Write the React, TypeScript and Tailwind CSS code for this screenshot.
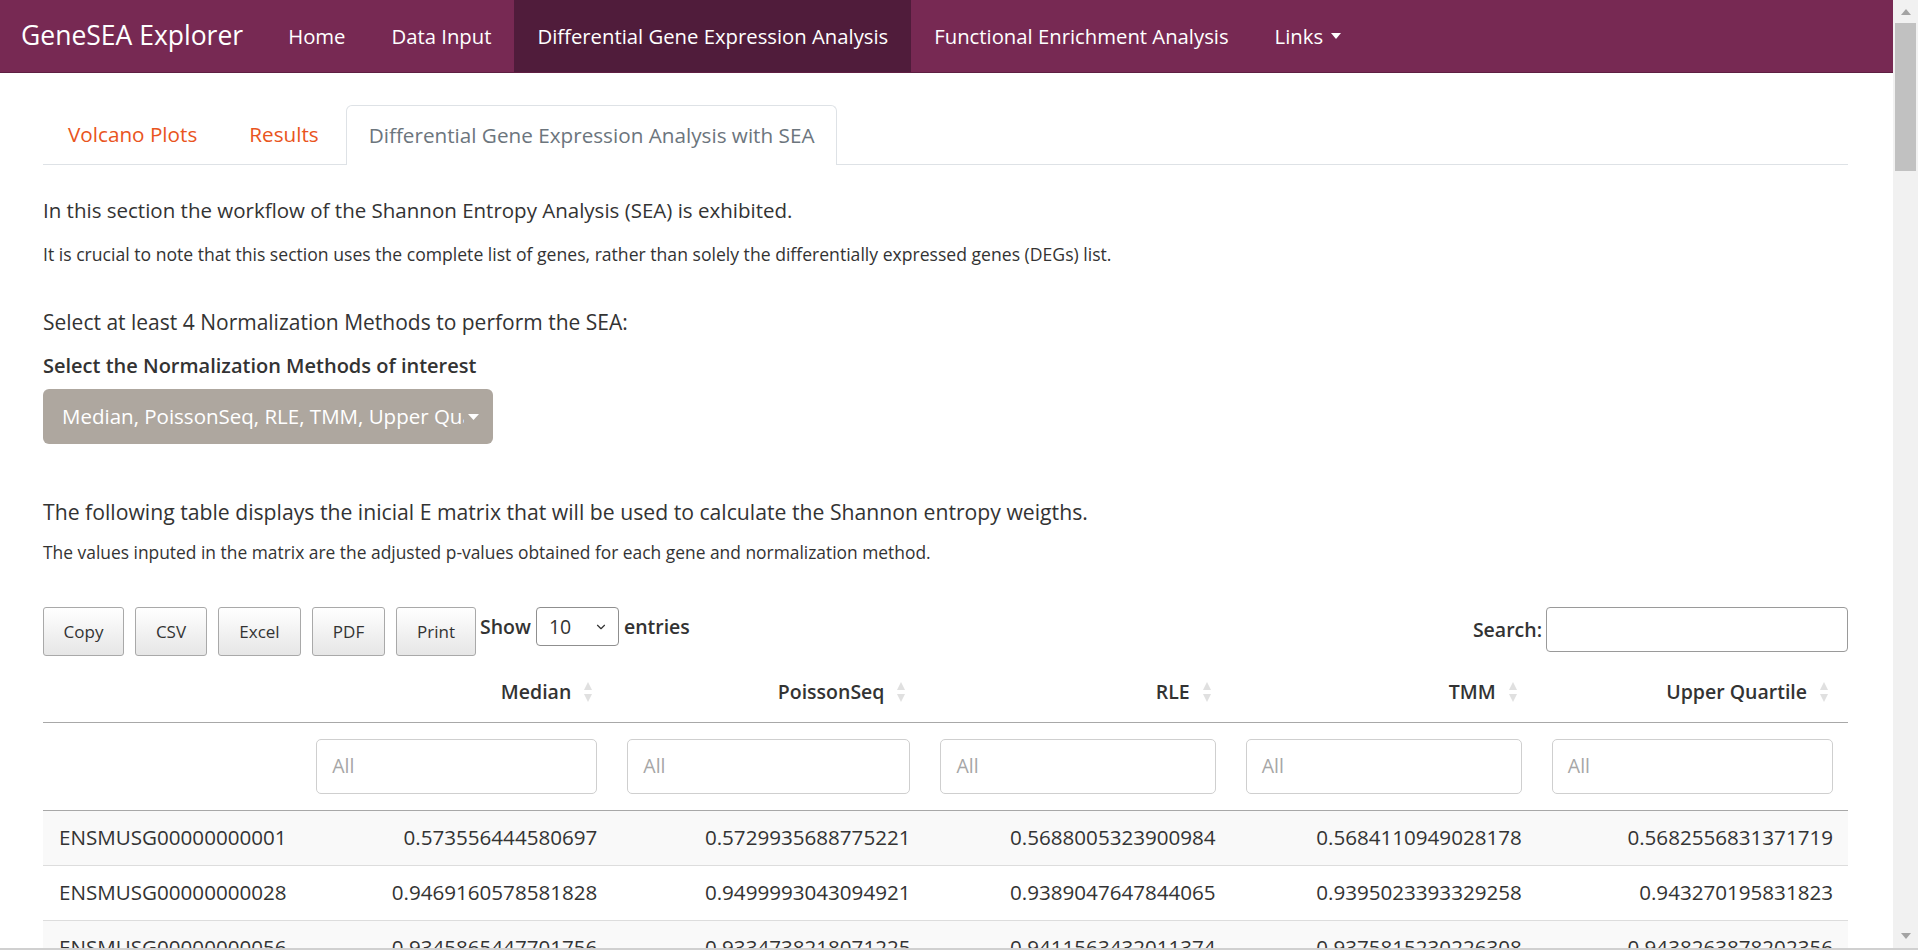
import { ChevronDown } from "lucide-react"

const navItems = [
  { label: "Home", active: false },
  { label: "Data Input", active: false },
  { label: "Differential Gene Expression Analysis", active: true },
  { label: "Functional Enrichment Analysis", active: false },
]

const exportButtons = [
  { label: "Copy", w: "w-[81px]" },
  { label: "CSV", w: "w-[72px]" },
  { label: "Excel", w: "w-[83px]" },
  { label: "PDF", w: "w-[73px]" },
  { label: "Print", w: "w-[80px]" },
]

const columns = ["Median", "PoissonSeq", "RLE", "TMM", "Upper Quartile"]

const rows = [
  ["ENSMUSG00000000001", "0.573556444580697", "0.5729935688775221", "0.5688005323900984", "0.5684110949028178", "0.5682556831371719"],
  ["ENSMUSG00000000028", "0.9469160578581828", "0.9499993043094921", "0.9389047647844065", "0.9395023393329258", "0.943270195831823"],
  ["ENSMUSG00000000056", "0.9345865447701756", "0.9334738218071225", "0.9411563432011374", "0.9375815230226308", "0.9438263878202356"],
]

function SortIcon() {
  return (
    <svg width="10" height="22" viewBox="0 0 10 22" className="shrink-0">
      <path d="M5 1 L9 9 L1 9 Z" fill="#e0e0e0" />
      <path d="M5 21 L9 13 L1 13 Z" fill="#e0e0e0" />
    </svg>
  )
}

function Scrollbar() {
  return (
    <div className="w-[25px] h-full bg-[#f1f1f1] flex flex-col items-center">
      <svg width="12" height="8" viewBox="0 0 12 8" className="mt-[8px]">
        <path d="M6 1 L11 7 L1 7 Z" fill="#a3a3a3" />
      </svg>
      <div className="mt-[7px] w-[21px] h-[148px] bg-[#c1c1c1]" />
      <div className="flex-1" />
      <svg width="12" height="8" viewBox="0 0 12 8" className="mb-[8px]">
        <path d="M6 7 L11 1 L1 1 Z" fill="#a3a3a3" />
      </svg>
    </div>
  )
}

export default function App() {
  return (
    <div className="w-[1918px] h-[950px] flex flex-col bg-white overflow-hidden font-['Open_Sans',sans-serif] text-[#333]">
      <div className="flex flex-1 min-h-0">
        <div className="flex-1 min-w-0 flex flex-col overflow-hidden">
          {/* navbar */}
          <nav className="h-[73px] shrink-0 bg-[#772953] border-b border-[#5e1f42] flex items-stretch text-white">
            <div className="pl-[21px] pr-[22px] flex items-center text-[26.5px]">GeneSEA Explorer</div>
            {navItems.map((item) => (
              <div
                key={item.label}
                className={`px-[23px] flex items-center text-[20.3px] ${item.active ? "bg-[#501c3b]" : ""}`}
              >
                {item.label}
              </div>
            ))}
            <div className="px-[23px] flex items-center text-[20.3px] gap-[8px]">
              Links
              <svg width="10" height="6" viewBox="0 0 10 6">
                <path d="M0 0 L10 0 L5 6 Z" fill="#fff" />
              </svg>
            </div>
          </nav>

          <div className="pl-[43px] pr-[45px] flex flex-col">
            {/* tabs */}
            <div className="mt-[32px] flex gap-[2px] border-b border-[#dee2e6] text-[20.7px]">
              <div className="h-[59px] px-[25px] flex items-center text-[#e95420]">Volcano Plots</div>
              <div className="h-[59px] px-[25px] flex items-center text-[#e95420]">Results</div>
              <div className="h-[60px] -mb-px px-[22px] flex items-center text-[#6c757d] bg-white border border-b-0 border-[#dee2e6] rounded-t-[6px]">
                Differential Gene Expression Analysis with SEA
              </div>
            </div>

            <p className="mt-[31px] text-[20.5px] leading-[28px]">
              In this section the workflow of the Shannon Entropy Analysis (SEA) is exhibited.
            </p>
            <p className="mt-[18px] text-[17.6px] leading-[24px]">
              It is crucial to note that this section uses the complete list of genes, rather than solely the differentially expressed genes (DEGs) list.
            </p>
            <p className="mt-[42px] text-[21px] leading-[28px]">Select at least 4 Normalization Methods to perform the SEA:</p>
            <p className="mt-[16px] text-[20px] leading-[28px] font-semibold">Select the Normalization Methods of interest</p>

            <div className="mt-[9px] w-[450px] h-[55px] rounded-[6px] bg-[#aea79f] text-white flex items-center pl-[19px] pr-[14px] gap-[4px]">
              <span className="flex-1 overflow-hidden whitespace-nowrap text-[20.5px]">
                Median, PoissonSeq, RLE, TMM, Upper Quartile
              </span>
              <svg width="11" height="6" viewBox="0 0 11 6" className="shrink-0">
                <path d="M0 0 L11 0 L5.5 6 Z" fill="#fff" />
              </svg>
            </div>

            <p className="mt-[54px] text-[21.2px] leading-[28px]">
              The following table displays the inicial E matrix that will be used to calculate the Shannon entropy weigths.
            </p>
            <p className="mt-[14px] text-[17.4px] leading-[24px]">
              The values inputed in the matrix are the adjusted p-values obtained for each gene and normalization method.
            </p>

            {/* table toolbar */}
            <div className="mt-[43px] flex items-start">
              <div className="flex gap-[11px]">
                {exportButtons.map((b) => (
                  <button
                    key={b.label}
                    className={`${b.w} h-[49px] rounded-[3px] border border-[#a9a9a9] bg-gradient-to-b from-white to-[#e6e6e6] text-[17px] text-[#333]`}
                  >
                    {b.label}
                  </button>
                ))}
              </div>
              <div className="ml-[4px] flex items-center gap-[5px] text-[19.5px] font-semibold h-[39px]">
                Show
                <div className="w-[83px] h-[39px] border border-[#8f8f8f] rounded-[4px] flex items-center justify-between pl-[12px] pr-[10px] font-normal">
                  <span>10</span>
                  <ChevronDown className="w-[14px] h-[14px] text-[#333]" strokeWidth={2} />
                </div>
                entries
              </div>
              <div className="flex-1" />
              <div className="flex items-center gap-[4px] text-[19.5px] font-semibold">
                Search:
                <div className="w-[302px] h-[45px] border border-[#9a9a9a] rounded-[4px] bg-white" />
              </div>
            </div>

            {/* table */}
            <table className="mt-[6px] w-full table-fixed border-collapse">
              <colgroup>
                <col className="w-[258px]" />
                <col className="w-[311px]" />
                <col className="w-[313px]" />
                <col className="w-[305px]" />
                <col className="w-[306px]" />
                <col className="w-[311px]" />
              </colgroup>
              <thead>
                <tr className="h-[60px] border-b border-[#a8a8a8]">
                  <th />
                  {columns.map((c) => (
                    <th key={c} className="px-[15px] font-semibold text-[19.5px]">
                      <div className="flex items-center justify-end gap-[12px] pr-[4px]">
                        <span>{c}</span>
                        <SortIcon />
                      </div>
                    </th>
                  ))}
                </tr>
                <tr className="h-[88px] border-b border-[#a8a8a8]">
                  <th />
                  {columns.map((c) => (
                    <th key={c} className="px-[15px] font-normal">
                      <div className="h-[55px] border border-[#cfcfcf] rounded-[5px] flex items-center px-[15px] text-[19.5px] text-[#a6a6a6]">
                        All
                      </div>
                    </th>
                  ))}
                </tr>
              </thead>
              <tbody>
                {rows.map((r, i) => (
                  <tr key={r[0]} className={`h-[55px] border-t border-[#dddddd] ${i % 2 === 0 ? "bg-[#f9f9f9]" : "bg-white"}`}>
                    {r.map((v, j) => (
                      <td key={j} className={`px-[15px] text-[20.6px] ${j === 0 ? "pl-[16px] text-left" : "text-right"}`}>
                        {v}
                      </td>
                    ))}
                  </tr>
                ))}
              </tbody>
            </table>
          </div>
        </div>
        <Scrollbar />
      </div>
      <div className="h-[2px] shrink-0 bg-[#d0d0d0]" />
    </div>
  )
}
